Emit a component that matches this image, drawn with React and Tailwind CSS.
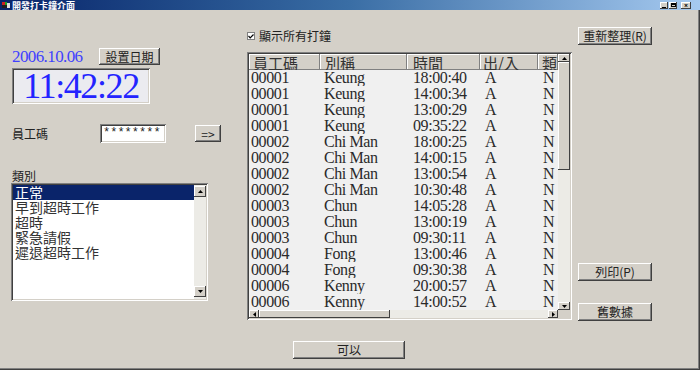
import React from 'react';

const raised =
  'bg-[#d4d0c8] shadow-[inset_-1px_-1px_#404040,inset_1px_1px_#ffffff,inset_-2px_-2px_#808080,inset_2px_2px_#d4d0c8]';
const raisedThin = 'bg-[#d4d0c8] shadow-[inset_-1px_-1px_#404040,inset_1px_1px_#ffffff]';
const sunken =
  'shadow-[inset_1px_1px_#808080,inset_-1px_-1px_#ffffff,inset_2px_2px_#404040,inset_-2px_-2px_#d4d0c8]';
const cjk = "font-['Noto_Sans_CJK_TC',sans-serif]";
const serif = "font-['Liberation_Serif','Noto_Sans_CJK_TC',serif]";

const records = [
  ['00001', 'Keung', '18:00:40'],
  ['00001', 'Keung', '14:00:34'],
  ['00001', 'Keung', '13:00:29'],
  ['00001', 'Keung', '09:35:22'],
  ['00002', 'Chi Man', '18:00:25'],
  ['00002', 'Chi Man', '14:00:15'],
  ['00002', 'Chi Man', '13:00:54'],
  ['00002', 'Chi Man', '10:30:48'],
  ['00003', 'Chun', '14:05:28'],
  ['00003', 'Chun', '13:00:19'],
  ['00003', 'Chun', '09:30:11'],
  ['00004', 'Fong', '13:00:46'],
  ['00004', 'Fong', '09:30:38'],
  ['00006', 'Kenny', '20:00:57'],
  ['00006', 'Kenny', '14:00:52'],
];

const categories = ['正常', '早到超時工作', '超時', '緊急請假', '遲退超時工作'];

function Arrow({ dir }) {
  const pts = {
    up: '0,3 2.5,0 5,3',
    down: '0,0 2.5,3 5,0',
    left: '3,0 0,2.5 3,5',
    right: '0,0 3,2.5 0,5',
  }[dir];
  const size = dir === 'up' || dir === 'down' ? { w: 5, h: 3 } : { w: 3, h: 5 };
  return (
    <svg width={size.w} height={size.h} viewBox={`0 0 ${size.w} ${size.h}`}>
      <polygon points={pts} fill="#000" />
    </svg>
  );
}

function Button({ className = '', children }) {
  return (
    <div className={`${raised} ${cjk} flex items-center justify-center text-[12px] leading-none text-[#222] ${className}`}>
      {children}
    </div>
  );
}

function TitleBar() {
  return (
    <div className="flex h-[10px] items-center bg-linear-to-r from-[#0a246a] via-[#3a6ea5] to-[#a6caf0]">
      <svg width="8" height="6" viewBox="0 0 8 6" className="ml-[2px]">
        <rect x="0" y="0" width="3" height="3" fill="#d02020" />
        <rect x="3" y="0" width="2" height="3" fill="#20a020" />
        <rect x="5" y="1" width="3" height="5" fill="#e0e0e0" />
        <rect x="0" y="3" width="5" height="3" fill="#202020" />
      </svg>
      <span className={`${cjk} ml-[2px] text-[9px] font-bold leading-none text-white`}>開發打卡鐘介面</span>
      <div className="ml-auto mr-[9px] flex items-center">
        <div className={`${raisedThin} flex h-[7px] w-[8px] items-end justify-center pb-[1px]`}>
          <div className="h-[1px] w-[4px] bg-black" />
        </div>
        <div className={`${raisedThin} ml-[1px] flex h-[7px] w-[8px] items-center justify-center`}>
          <div className="h-[4px] w-[5px] border border-t-2 border-black" />
        </div>
        <div className={`${raisedThin} ml-[4px] flex h-[7px] w-[10px] items-center justify-center text-[7px] font-bold leading-none`}>
          ×
        </div>
      </div>
    </div>
  );
}

function LeftPanel() {
  return (
    <div className="flex w-[246px] flex-col pl-[12px]">
      <div className="mt-[38px] flex h-[17px] items-center">
        <span className="w-[87px] font-['Liberation_Serif',serif] text-[17px] leading-none tracking-[-0.6px] text-[#4040ff]">
          2006.10.06
        </span>
        <Button className="h-[17px] w-[61px]">設置日期</Button>
      </div>
      <div className={`${sunken} mt-[3px] flex h-[36px] w-[138px] items-center justify-center bg-[#ebebf0]`}>
        <span className="font-['Liberation_Serif',serif] text-[36px] leading-none tracking-[-1.4px] text-[#2424ff]">
          11:42:22
        </span>
      </div>
      <div className="mt-[20px] flex h-[19px] items-center">
        <span className={`${cjk} w-[88px] text-[12px] leading-none text-[#222]`}>員工碼</span>
        <div className={`${sunken} h-[19px] w-[66px] bg-white pl-[3px] pt-[3px] font-['Liberation_Mono',monospace] text-[12px] leading-none text-[#222]`}>
          ********
        </div>
        <Button className="ml-[29px] h-[17px] w-[26px] font-['Liberation_Sans',sans-serif]">=&gt;</Button>
      </div>
      <div className={`${cjk} mt-[26px] h-[14px] text-[12px] leading-[14px] text-[#222]`}>類別</div>
      <div className={`${sunken} -ml-[1px] flex h-[118px] w-[197px] bg-white p-[2px]`}>
        <div className={`${cjk} flex-1 text-[14px] leading-[15px] text-[#333]`}>
          {categories.map((c, i) => (
            <div key={c} className={`h-[15px] pl-[2px] ${i === 0 ? 'bg-[#0a246a] text-white' : ''}`}>
              {c}
            </div>
          ))}
        </div>
        <div className="flex w-[12px] flex-col bg-[#ecebe6] py-[1px]">
          <div className={`${raisedThin} flex h-[11px] items-center justify-center`}>
            <Arrow dir="up" />
          </div>
          <div className="flex-1" />
          <div className={`${raisedThin} mb-[1px] flex h-[11px] items-center justify-center`}>
            <Arrow dir="down" />
          </div>
        </div>
      </div>
    </div>
  );
}

const cols = [
  { w: 'w-[71px]', head: 'pl-[4px]', cell: 'pl-[2px]' },
  { w: 'w-[87px]', head: 'pl-[5px]', cell: 'pl-[4px]' },
  { w: 'w-[73px]', head: 'pl-[6px]', cell: 'pl-[6px]' },
  { w: 'w-[58px]', head: 'pl-[3px]', cell: 'pl-[5px]' },
  { w: 'w-[20px]', head: 'pl-[4px]', cell: 'pl-[5px]' },
];

function RecordTable() {
  const headers = ['員工碼', '別稱', '時間', '出/入', '類別'];
  return (
    <div className={`${sunken} ml-[1px] mt-[11px] flex h-[268px] w-[325px] bg-[#f0f0f0] p-[2px]`}>
      <div className="flex w-[309px] flex-col overflow-hidden">
        <div className="flex h-[16px]">
          {headers.map((h, i) => (
            <div
              key={h}
              className={`${cols[i].w} ${cols[i].head} flex shrink-0 items-center overflow-hidden whitespace-nowrap bg-[#d4d0c8] shadow-[inset_-1px_-1px_#808080,inset_1px_1px_#ffffff] ${cjk} text-[15px] leading-none text-[#333]`}
            >
              {h}
            </div>
          ))}
        </div>
        <div className={`${serif} flex-1 overflow-hidden text-[16px] leading-[16px] tracking-[-0.4px] text-[#2a2a2a]`}>
          {records.map((r, idx) => (
            <div key={idx} className="flex h-[16px]">
              {[r[0], r[1], r[2], 'A', 'N'].map((v, i) => (
                <div key={i} className={`${cols[i].w} ${cols[i].cell} shrink-0 overflow-hidden whitespace-pre`}>
                  {v}
                </div>
              ))}
            </div>
          ))}
        </div>
        <div className="flex h-[8px] bg-[#ecebe6]">
          <div className={`${raisedThin} flex w-[10px] items-center justify-center`}>
            <Arrow dir="left" />
          </div>
          <div className={`${raisedThin} w-[131px]`} />
          <div className="flex-1" />
          <div className={`${raisedThin} flex w-[10px] items-center justify-center`}>
            <Arrow dir="right" />
          </div>
        </div>
      </div>
      <div className="flex w-[12px] flex-col bg-[#ecebe6]">
        <div className={`${raisedThin} flex h-[8px] items-center justify-center`}>
          <Arrow dir="up" />
        </div>
        <div className={`${raisedThin} h-[108px]`} />
        <div className="flex-1" />
        <div className={`${raisedThin} flex h-[8px] items-center justify-center`}>
          <Arrow dir="down" />
        </div>
        <div className="h-[8px] bg-[#d4d0c8]" />
      </div>
    </div>
  );
}

function MiddlePanel() {
  return (
    <div className="flex w-[332px] flex-col">
      <div className="mt-[21px] flex h-[10px] items-center">
        <div className="ml-[1px] flex h-[8px] w-[8px] items-center justify-center border border-[#808080] bg-white">
          <svg width="6" height="5" viewBox="0 0 6 5">
            <polyline points="0.5,2 2.2,3.8 5.5,0.5" fill="none" stroke="#000" strokeWidth="1.2" />
          </svg>
        </div>
        <span className={`${cjk} ml-[4px] text-[12px] leading-none text-[#222]`}>顯示所有打鐘</span>
      </div>
      <RecordTable />
      <Button className="ml-[47px] mt-[21px] h-[18px] w-[112px]">可以</Button>
    </div>
  );
}

function RightPanel() {
  return (
    <div className="flex flex-col">
      <Button className="mt-[17px] h-[18px] w-[74px]">重新整理(R)</Button>
      <Button className="mt-[218px] h-[18px] w-[74px]">列印(P)</Button>
      <Button className="mt-[22px] h-[18px] w-[74px]">舊數據</Button>
    </div>
  );
}

export default function App() {
  return (
    <div className="flex h-[370px] w-[700px] flex-col overflow-hidden bg-[#d4d0c8] shadow-[inset_-1px_-1px_#404040,inset_-2px_-2px_#808080]">
      <TitleBar />
      <div className="flex flex-1">
        <LeftPanel />
        <MiddlePanel />
        <RightPanel />
      </div>
    </div>
  );
}
